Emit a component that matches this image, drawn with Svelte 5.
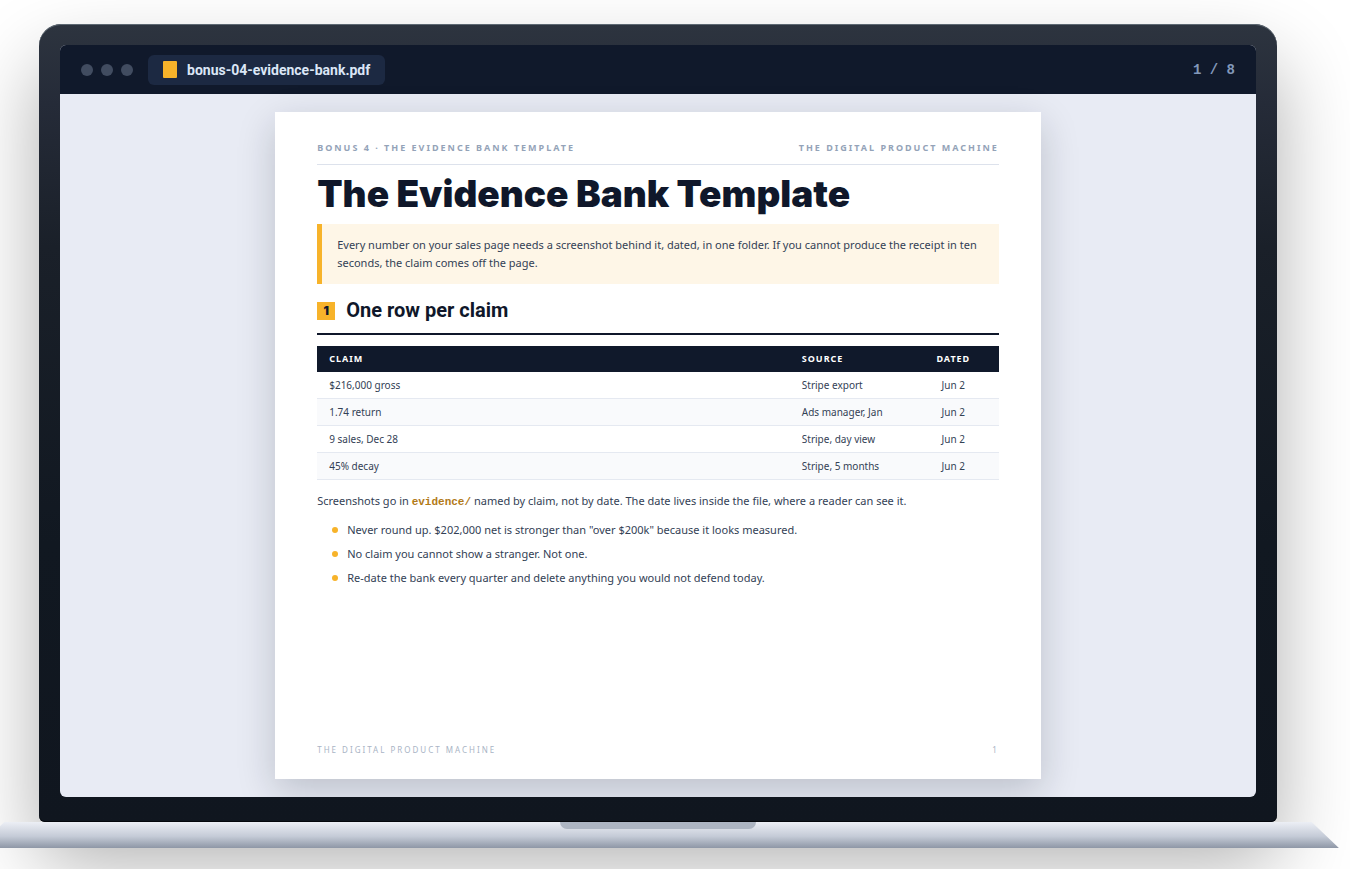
<script>
  const file = "bonus-04-evidence-bank.pdf";
  const brand = "The Digital Product Machine";

  const rows = [
    { claim: "$216,000 gross", source: "Stripe export", dated: "Jun 2" },
    { claim: "1.74 return", source: "Ads manager, Jan", dated: "Jun 2" },
    { claim: "9 sales, Dec 28", source: "Stripe, day view", dated: "Jun 2" },
    { claim: "45% decay", source: "Stripe, 5 months", dated: "Jun 2" },
  ];

  const rules = [
    'Never round up. $202,000 net is stronger than "over $200k" because it looks measured.',
    "No claim you cannot show a stranger. Not one.",
    "Re-date the bank every quarter and delete anything you would not defend today.",
  ];
</script>

<main class="stage">
  <div class="laptop">
    <div class="lid">
      <div class="screen">
        <header class="bar">
          <div class="dots"><span></span><span></span><span></span></div>
          <div class="tab">
            <span class="file-icon"></span>
            <span>{file}</span>
          </div>
          <span class="counter">1 / 8</span>
        </header>

        <div class="viewer">
          <article class="sheet">
            <div class="running-head">
              <span>Bonus 4 · The Evidence Bank Template</span>
              <span>{brand}</span>
            </div>

            <h1>The Evidence Bank Template</h1>

            <p class="callout">
              Every number on your sales page needs a screenshot behind it, dated, in one folder. If you
              cannot produce the receipt in ten seconds, the claim comes off the page.
            </p>

            <h2><span class="step">1</span>One row per claim</h2>

            <table>
              <thead>
                <tr>
                  <th>Claim</th>
                  <th class="source">Source</th>
                  <th class="dated">Dated</th>
                </tr>
              </thead>
              <tbody>
                {#each rows as row}
                  <tr>
                    <td>{row.claim}</td>
                    <td>{row.source}</td>
                    <td class="dated">{row.dated}</td>
                  </tr>
                {/each}
              </tbody>
            </table>

            <p class="note">
              Screenshots go in <code>evidence/</code> named by claim, not by date. The date lives inside
              the file, where a reader can see it.
            </p>

            <ul>
              {#each rules as rule}
                <li>{rule}</li>
              {/each}
            </ul>

            <footer>
              <span>{brand}</span>
              <span>1</span>
            </footer>
          </article>
        </div>
      </div>
    </div>
    <div class="base"><div class="notch"></div></div>
  </div>
</main>

<style>
  :global(body) {
    background: #fff;
  }

  .stage {
    box-sizing: border-box;
    min-height: 100vh;
    padding: 24px 73px 21px 39px;
    overflow: hidden;
    font-family: "Noto Sans", Roboto, sans-serif;
    color: #334155;
  }

  .lid {
    padding: 21px 21px 25px;
    border-radius: 22px 22px 6px 6px;
    background: linear-gradient(#2d343f 0%, #252b38 10%, #1a2029 28%, #111821 65%, #10161f 100%);
    box-shadow:
      0 40px 80px rgba(0, 0, 0, 0.32),
      inset 0 1px 0 #5d6872,
      inset 0 -1px 0 #05080d;
  }

  .screen {
    border-radius: 6px;
    overflow: hidden;
    background: #e8ebf4;
  }

  /* Window bar */
  .bar {
    display: flex;
    align-items: center;
    gap: 15px;
    height: 49px;
    padding: 0 21px;
    background: #10192b;
  }

  .dots {
    display: flex;
    gap: 8px;
  }

  .dots span {
    width: 12px;
    height: 12px;
    border-radius: 50%;
    background: #414c60;
  }

  .tab {
    display: flex;
    align-items: center;
    gap: 10px;
    height: 30px;
    padding: 0 15px;
    border-radius: 6px;
    background: #1c2942;
    color: #dbe6f6;
    font-family: Roboto, sans-serif;
    font-size: 14px;
    font-weight: 700;
  }

  .file-icon {
    width: 14px;
    height: 17px;
    border-radius: 1px;
    background: #f7b32a;
  }

  .counter {
    margin-left: auto;
    color: #8298ba;
    font: 600 14px "Liberation Mono", monospace;
  }

  /* Document */
  .viewer {
    display: flex;
    justify-content: center;
    padding: 18px;
  }

  .sheet {
    box-sizing: border-box;
    display: flex;
    flex-direction: column;
    width: 66%;
    min-height: 667px;
    padding: 27px 42px 20px;
    background: #fff;
    box-shadow: 0 12px 36px rgba(15, 23, 42, 0.2);
    font-size: 11px;
    line-height: 18px;
  }

  .running-head {
    display: flex;
    justify-content: space-between;
    padding-bottom: 7px;
    border-bottom: 1px solid #dde2ec;
    color: #94a3b8;
    font-size: 9px;
    font-weight: 700;
    letter-spacing: 2px;
    text-transform: uppercase;
  }

  h1 {
    margin: 9px 0 10px;
    color: #0f172a;
    font-family: Inter, sans-serif;
    font-size: 37px;
    font-weight: 900;
    line-height: 40px;
  }

  .callout {
    margin: 0;
    padding: 12px 15px;
    border-left: 5px solid #f7b32a;
    background: #fef6e7;
  }

  h2 {
    display: flex;
    align-items: center;
    gap: 11px;
    margin: 14px 0 11px;
    padding-bottom: 10px;
    border-bottom: 2px solid #0f172a;
    color: #0f172a;
    font-family: Roboto, sans-serif;
    font-size: 20px;
    line-height: 25px;
  }

  .step {
    width: 18px;
    background: #f7b32a;
    font-family: Inter, sans-serif;
    font-size: 12px;
    font-weight: 900;
    line-height: 18px;
    text-align: center;
  }

  table {
    width: 100%;
    border-collapse: collapse;
    table-layout: fixed;
    font-size: 10px;
  }

  th,
  td {
    padding: 4px 12px;
    text-align: left;
  }

  th {
    background: #10192b;
    color: #fff;
    font-size: 9px;
    letter-spacing: 1px;
    text-transform: uppercase;
  }

  td {
    border-bottom: 1px solid #e5e9f1;
  }

  tbody tr:nth-child(even) {
    background: #f9fafc;
  }

  .source {
    width: 94px;
  }

  .dated {
    width: 67px;
    text-align: center;
  }

  .note {
    margin: 12px 0 8px;
  }

  code {
    color: #b27a18;
    font: 700 11px "Liberation Mono", monospace;
  }

  ul {
    margin: 0;
    padding: 0 0 0 15px;
    list-style: none;
  }

  li {
    display: flex;
    align-items: center;
    gap: 9px;
    padding: 3px 0;
  }

  li::before {
    content: "";
    width: 6px;
    height: 6px;
    border-radius: 50%;
    background: #f7b32a;
  }

  footer {
    display: flex;
    justify-content: space-between;
    margin-top: auto;
    color: #a9b4c5;
    font-size: 8px;
    letter-spacing: 2px;
    text-transform: uppercase;
  }

  /* Keyboard deck seen from the front */
  .base {
    position: relative;
    height: 26px;
    margin: 0 -5%;
    background: linear-gradient(#eceff5, #c5cbd7 55%, #8e97a6);
    clip-path: polygon(2% 0, 98% 0, 100% 100%, 0 100%);
  }

  .notch {
    width: 196px;
    height: 7px;
    margin: 0 auto;
    border-radius: 0 0 8px 8px;
    background: #adb5c2;
  }
</style>
